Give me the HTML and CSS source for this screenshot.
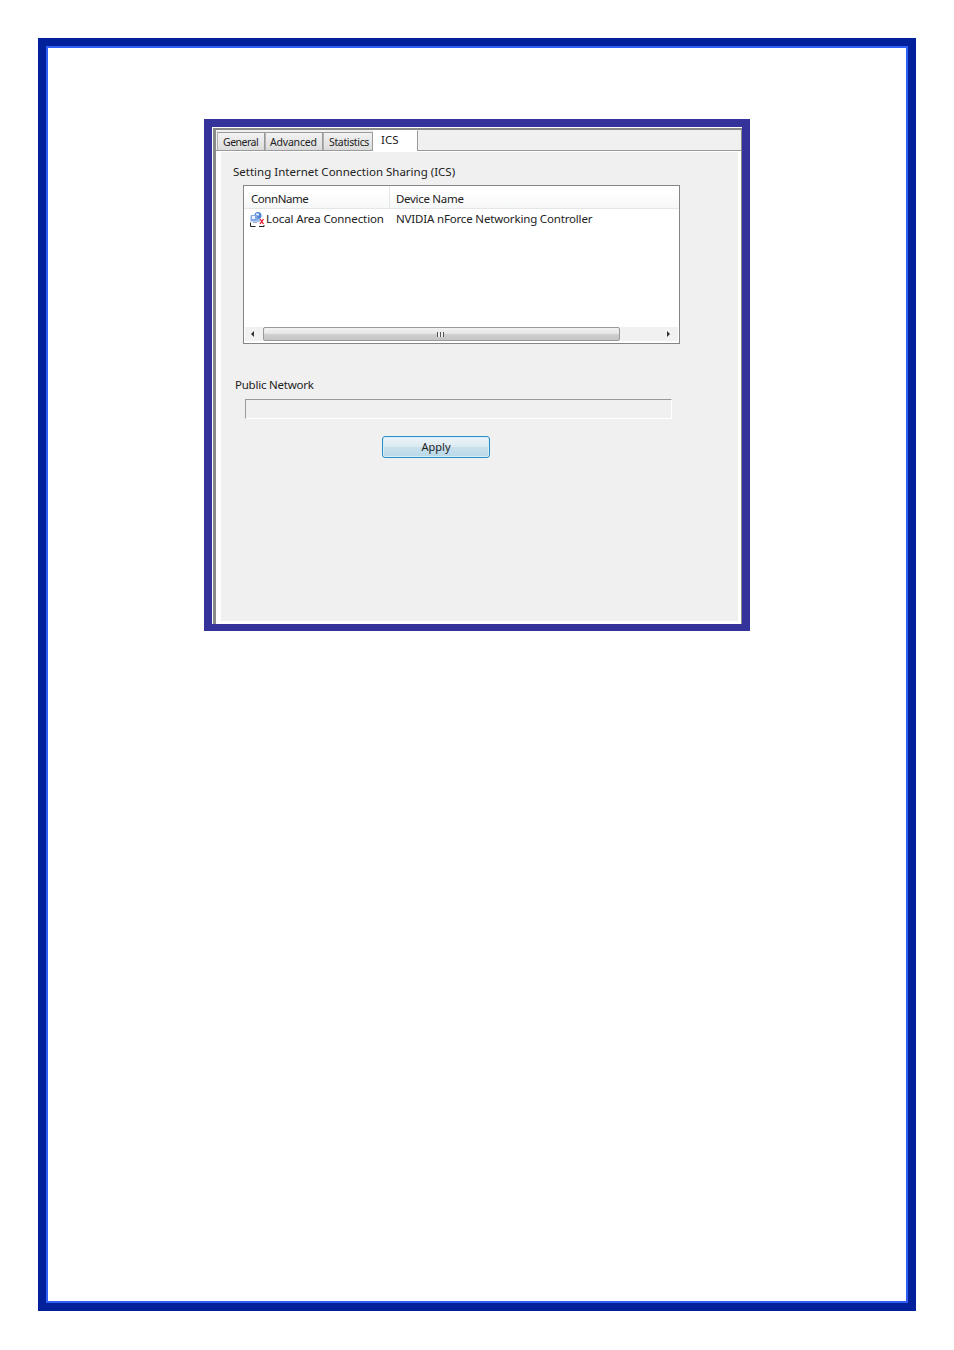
FILE: index.html
```html
<!DOCTYPE html>
<html lang="en">
<head>
<meta charset="utf-8">
<title>ICS</title>
<link rel="stylesheet" href="styles.css">
</head>
<body>
<div class="frame">
  <div class="page">
    <div class="shot">
      <div class="dialog">
        <div class="tabs">
          <div class="tab t1">General</div>
          <div class="tab t2">Advanced</div>
          <div class="tab t3">Statistics</div>
          <div class="tab active">ICS</div>
        </div>
        <div class="panel">
          <div class="heading">Setting Internet Connection Sharing (ICS)</div>
          <div class="list">
            <div class="head">
              <div class="c1">ConnName</div>
              <div class="c2">Device Name</div>
            </div>
            <div class="row">
              <svg class="ico" viewBox="0 0 16 16" width="16" height="16">
                <circle cx="9" cy="3.500" r="3.500" fill="#4f86d6"/>
                <path d="M7 1.500h3v2H7z" fill="#e3eefc"/>
                <rect x="1.500" y="3" width="7" height="6.500" rx="1" fill="#7ea8e8"/>
                <path d="M3 4h3v3H3z" fill="#eef4fd"/>
                <path d="M8 7h3v3H8z" fill="#a9c4ea"/>
                <path d="M4 10h4v1H4z" fill="#9aa7b8"/>
                <path d="M1.500 10.500v4h5M15 13v1.500H10" fill="none" stroke="#222" stroke-width="1"/>
                <path d="M11 7l3.500 5M14.500 7L11 12" stroke="#e01020" stroke-width="1.300"/>
              </svg>
              <div class="n1">Local Area Connection</div>
              <div class="n2">NVIDIA nForce Networking Controller</div>
            </div>
            <div class="scroll">
              <div class="end"><span class="arrow left"></span></div>
              <div class="thumb"><span class="grip"></span></div>
              <div class="end far"><span class="arrow right"></span></div>
            </div>
          </div>
          <div class="label">Public Network</div>
          <div class="field"></div>
          <div class="btn">Apply</div>
        </div>
      </div>
    </div>
  </div>
</div>
</body>
</html>
```
FILE: styles.css
```css
* { box-sizing: border-box; }
html, body { margin: 0; padding: 0; background: #fff; }
body {
  width: 954px;
  height: 1350px;
  padding: 38px 38px 0;
  font-family: "Noto Sans", "Open Sans", sans-serif;
  font-size: 11.5px;
  color: #222;
}
.frame {
  width: 878px;
  height: 1273px;
  background: #00209c;
  padding: 8px;
}
.page {
  height: 100%;
  border: 2px solid #2f5ff5;
  background: #fff;
  padding: 71px 0 0 156px;
}
.shot {
  width: 546px;
  height: 512px;
  border: solid #333399;
  border-width: 8px 8px 7px;
  background: #fff;
  padding: 1px 0 0 1px;
}
.dialog {
  height: 100%;
  border-top: 2px solid #8a8a8a;
  border-left: 3px solid #8a8a8a;
  border-right: 1px solid #8a8a8a;
  background: #fff;
}
.tabs {
  height: 21px;
  display: flex;
  align-items: flex-end;
  padding-left: 1px;
  background: #f0f0f0;
  border-bottom: 1px solid #9a9a9a;
}
.tab {
  height: 18px;
  border: 1px solid #9a9a9a;
  border-bottom: 0;
  border-left-color: #b0b0b0;
  background: linear-gradient(#f2f2f2, #dcdcdc);
  font-size: 10.5px;
  line-height: 18px;
}
.t1 { width: 48px; padding-left: 5px; letter-spacing: -0.5px; }
.t2 { width: 58px; padding-left: 4px; letter-spacing: -0.2px; }
.t3 { width: 50px; padding-left: 5px; letter-spacing: -0.35px; }
.active {
  width: 45px;
  height: 21px;
  margin-bottom: -1px;
  padding-left: 7px;
  background: #fff;
  border-left-color: #fff;
  border-top-color: #fff;
  font-size: 11.5px;
  line-height: 18px;
}
.panel {
  height: 469px;
  margin: 1px 3px 0 5px;
  padding: 12px 0 0 12px;
  background: #f0f0f0;
}
.heading {
  height: 16px;
  line-height: 16px;
  white-space: nowrap;
}
.list {
  width: 437px;
  height: 159px;
  margin: 5px 0 0 10px;
  border: 1px solid #858585;
  background: #fff;
  display: flex;
  flex-direction: column;
}
.head {
  height: 23px;
  display: flex;
  line-height: 15px;
  background: linear-gradient(#fff 30%, #f6f7f8);
  border-bottom: 1px solid #e4e6e8;
}
.c1 {
  width: 146px;
  padding: 5px 0 0 7px;
  border-right: 1px solid #e4e6e8;
  letter-spacing: -0.45px;
}
.c2 {
  padding: 5px 0 0 6px;
  letter-spacing: -0.3px;
}
.row {
  flex: 1 1 auto;
  display: flex;
  padding-left: 5px;
  white-space: nowrap;
  line-height: 20px;
}
.ico { flex: none; margin: 3px 1px 0 0; }
.n1 { width: 130px; letter-spacing: -0.12px; }
.n2 { letter-spacing: -0.17px; }
.scroll {
  height: 17px;
  display: flex;
  background: #f1f1f1;
  border: solid #fff;
  border-width: 1px 0 2px;
  margin: 0 1px;
}
.end {
  width: 18px;
  display: flex;
  align-items: center;
  justify-content: center;
}
.far {
  flex: 1 1 auto;
  justify-content: flex-end;
  padding-right: 8px;
}
.arrow {
  width: 0;
  height: 0;
  border-style: solid;
  border-color: transparent;
  border-width: 3px 0;
}
.left { border-right: 3px solid #333; margin-right: 3px; }
.right { border-left: 3px solid #333; }
.thumb {
  width: 357px;
  border: 1px solid #9a9a9a;
  border-radius: 2px;
  background: linear-gradient(#f2f2f2 0%, #e6e6e6 45%, #cfcfcf 55%, #c4c4c4 100%);
  display: flex;
  align-items: center;
  justify-content: center;
}
.grip {
  width: 7px;
  height: 5px;
  margin-right: 3px;
  background: repeating-linear-gradient(90deg, #555 0 1px, #eee 1px 3px);
}
.label {
  height: 16px;
  margin: 33px 0 0 2px;
  line-height: 16px;
  letter-spacing: -0.22px;
}
.field {
  width: 427px;
  height: 20px;
  margin: 6px 0 0 12px;
  border: 1px solid #fff;
  border-top-color: #999;
  border-left-color: #999;
  background: #f0f0f0;
}
.btn {
  width: 108px;
  height: 22px;
  margin: 17px 0 0 149px;
  border: 1px solid #2a8fc4;
  border-radius: 3px;
  box-shadow: inset 0 0 0 1px #d6eefa;
  background: linear-gradient(#ecf4f9 0%, #dceaf2 48%, #c8e0ec 52%, #bad8e8 100%);
  text-align: center;
  line-height: 19px;
  font-size: 11px;
}
```
